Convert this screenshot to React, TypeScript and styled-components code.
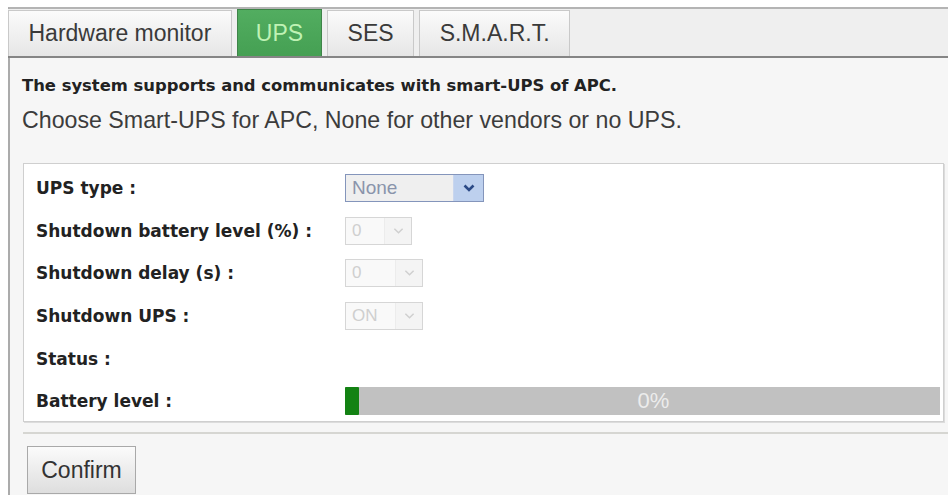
import React from "react";
import styled, { createGlobalStyle } from "styled-components";

const Global = createGlobalStyle`
  html, body { margin: 0; padding: 0; background: #ffffff; overflow: hidden; }
  body { width: 948px; height: 495px; font-family: "Liberation Sans", Arial, sans-serif; }
`;

const Frame = styled.div`
  margin: 7px 0 0 8px;
  border-left: 2px solid #ababab;
  border-top: 2px solid #b4b4b4;
  height: 486px;
  background: #f6f6f6;
  display: flex;
  flex-direction: column;
`;

const TabBar = styled.div`
  display: flex;
  align-items: flex-end;
  gap: 5px;
  height: 47px;
  margin-left: -2px;
  background: #efefef;
  border-bottom: 2px solid #858585;
`;

const Tab = styled.div<{ $active?: boolean }>`
  height: ${(p) => (p.$active ? 47 : 46)}px;
  box-sizing: border-box;
  padding: 0 ${(p) => (p.$active ? 18 : 19.5)}px;
  display: flex;
  align-items: center;
  font-size: 23px;
  color: ${(p) => (p.$active ? "#bff2b4" : "#3a3a3a")};
  background: ${(p) =>
    p.$active
      ? "linear-gradient(#52ad60, #45a053)"
      : "linear-gradient(#fbfbfb, #e6e6e6)"};
  border: 1px solid ${(p) => (p.$active ? "#3f8449" : "#c9c9c9")};
  border-bottom: none;
`;

const Panel = styled.div`
  padding: 18px 0 0 12px;
  display: flex;
  flex-direction: column;
`;

const Intro = styled.div`
  font-family: "DejaVu Sans", Verdana, sans-serif;
  font-weight: bold;
  font-size: 16.4px;
  line-height: 20px;
  color: #222;
`;

const Hint = styled.div`
  margin-top: 10px;
  font-size: 23.2px;
  line-height: 28px;
  color: #3c3c3c;
`;

const Box = styled.div`
  margin: 29px 4px 0 1px;
  background: #ffffff;
  border: 1px solid #cfcfcf;
  box-shadow: 1px 1px 0 #dcdcdc;
  padding: 3px 3px 0 12px;
  height: 259px;
  box-sizing: border-box;
`;

const Row = styled.div`
  display: grid;
  grid-template-columns: 309px 1fr;
  align-items: center;
  height: 42.6px;
`;

const Label = styled.div`
  font-family: "DejaVu Sans", Verdana, sans-serif;
  font-weight: bold;
  font-size: 17px;
  color: #222;
`;

const Select = styled.div<{ $w: number; $enabled?: boolean }>`
  width: ${(p) => p.$w}px;
  height: 28px;
  box-sizing: border-box;
  display: flex;
  align-items: stretch;
  border: 1px solid ${(p) => (p.$enabled ? "#8495bb" : "#d6d6d6")};
  background: ${(p) => (p.$enabled ? "#efefef" : "#f9f9f9")};
`;

const SelectText = styled.div<{ $enabled?: boolean }>`
  flex: 1;
  display: flex;
  align-items: center;
  padding-left: 6px;
  font-size: ${(p) => (p.$enabled ? 19 : 17)}px;
  color: ${(p) => (p.$enabled ? "#8a94ab" : "#cfcfcf")};
`;

const Arrow = styled.div<{ $enabled?: boolean }>`
  width: ${(p) => (p.$enabled ? 29 : 26)}px;
  display: flex;
  align-items: center;
  justify-content: center;
  background: ${(p) => (p.$enabled ? "#bdd0ee" : "#f4f4f4")};
  border-left: 1px solid ${(p) => (p.$enabled ? "#c9d6ee" : "#ececec")};
`;

const Bar = styled.div`
  position: relative;
  height: 28px;
  background: #c1c1c1;
  display: flex;
  align-items: stretch;
`;

const BarFill = styled.div`
  background: #138213;
  border-radius: 1px;
`;

const BarText = styled.div`
  position: absolute;
  inset: 0;
  display: flex;
  align-items: center;
  justify-content: center;
  padding-left: 22px;
  font-size: 22px;
  color: #ececec;
`;

const Separator = styled.div`
  margin: 10px 0 0 1px;
  height: 2px;
  background: #d6d6d2;
`;

const Button = styled.div`
  margin: 12px 0 0 5px;
  width: 109px;
  height: 48px;
  box-sizing: border-box;
  border: 1px solid #a9a9a9;
  background: linear-gradient(#fbfbfb, #dedede);
  display: flex;
  align-items: center;
  justify-content: center;
  font-size: 23px;
  color: #333;
`;

const Chevron = ({ enabled }: { enabled?: boolean }) => (
  <svg width={enabled ? 12 : 11} height="8" viewBox="0 0 12 8">
    <path
      d="M1.5 1.5 L6 6 L10.5 1.5"
      fill="none"
      stroke={enabled ? "#2b4a86" : "#cfcfcf"}
      strokeWidth={enabled ? 2.6 : 1.6}
    />
  </svg>
);

const Dropdown = ({ w, value, enabled }: { w: number; value: string; enabled?: boolean }) => (
  <Select $w={w} $enabled={enabled}>
    <SelectText $enabled={enabled}>{value}</SelectText>
    <Arrow $enabled={enabled}>
      <Chevron enabled={enabled} />
    </Arrow>
  </Select>
);

export default function App() {
  const level = 0;
  return (
    <>
      <Global />
      <Frame>
        <TabBar>
          <Tab>Hardware monitor</Tab>
          <Tab $active>UPS</Tab>
          <Tab>SES</Tab>
          <Tab>S.M.A.R.T.</Tab>
        </TabBar>
        <Panel>
          <Intro>The system supports and communicates with smart-UPS of APC.</Intro>
          <Hint>Choose Smart-UPS for APC, None for other vendors or no UPS.</Hint>
          <Box>
            <Row>
              <Label>UPS type :</Label>
              <Dropdown w={139} value="None" enabled />
            </Row>
            <Row>
              <Label>Shutdown battery level (%) :</Label>
              <Dropdown w={67} value="0" />
            </Row>
            <Row>
              <Label>Shutdown delay (s) :</Label>
              <Dropdown w={78} value="0" />
            </Row>
            <Row>
              <Label>Shutdown UPS :</Label>
              <Dropdown w={78} value="ON" />
            </Row>
            <Row>
              <Label>Status :</Label>
              <div />
            </Row>
            <Row>
              <Label>Battery level :</Label>
              <Bar>
                <BarFill style={{ width: Math.max(14, level * 5.95) }} />
                <BarText>{level}%</BarText>
              </Bar>
            </Row>
          </Box>
          <Separator />
          <Button>Confirm</Button>
        </Panel>
      </Frame>
    </>
  );
}
